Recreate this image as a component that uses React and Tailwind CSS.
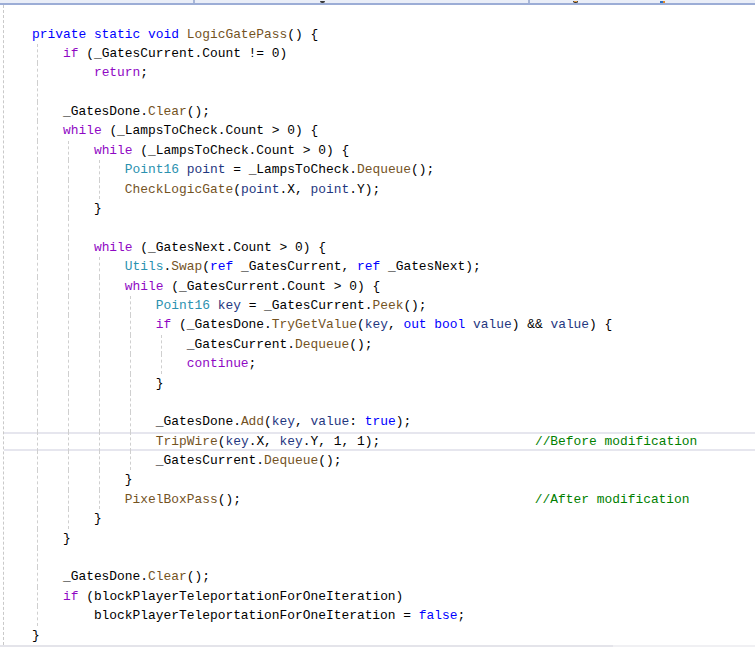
import React from 'react';

// token colours, VS light theme
const C = {
  k: 'text-[#0000ff]',
  c: 'text-[#8f08c4]',
  t: 'text-[#2b91af]',
  m: 'text-[#74531f]',
  v: 'text-[#1f377f]',
  g: 'text-[#008000]',
};

const guideLeft = ['left-[33px]', 'left-[64px]', 'left-[95px]', 'left-[126px]', 'left-[157px]'];

const lines = [
  [['k', 'private static void '], ['m', 'LogicGatePass'], '() {'],
  ['    ', ['c', 'if'], ' (_GatesCurrent.Count != 0)'],
  ['        ', ['c', 'return'], ';'],
  [],
  ['    _GatesDone.', ['m', 'Clear'], '();'],
  ['    ', ['c', 'while'], ' (_LampsToCheck.Count > 0) {'],
  ['        ', ['c', 'while'], ' (_LampsToCheck.Count > 0) {'],
  ['            ', ['t', 'Point16'], ' ', ['v', 'point'], ' = _LampsToCheck.', ['m', 'Dequeue'], '();'],
  ['            ', ['m', 'CheckLogicGate'], '(', ['v', 'point'], '.X, ', ['v', 'point'], '.Y);'],
  ['        }'],
  [],
  ['        ', ['c', 'while'], ' (_GatesNext.Count > 0) {'],
  ['            ', ['t', 'Utils'], '.', ['m', 'Swap'], '(', ['k', 'ref'], ' _GatesCurrent, ', ['k', 'ref'], ' _GatesNext);'],
  ['            ', ['c', 'while'], ' (_GatesCurrent.Count > 0) {'],
  ['                ', ['t', 'Point16'], ' ', ['v', 'key'], ' = _GatesCurrent.', ['m', 'Peek'], '();'],
  ['                ', ['c', 'if'], ' (_GatesDone.', ['m', 'TryGetValue'], '(', ['v', 'key'], ', ', ['k', 'out bool'], ' ', ['v', 'value'], ') && ', ['v', 'value'], ') {'],
  ['                    _GatesCurrent.', ['m', 'Dequeue'], '();'],
  ['                    ', ['c', 'continue'], ';'],
  ['                }'],
  [],
  ['                _GatesDone.', ['m', 'Add'], '(', ['v', 'key'], ', ', ['v', 'value'], ': ', ['k', 'true'], ');'],
  ['                ', ['m', 'TripWire'], '(', ['v', 'key'], '.X, ', ['v', 'key'], '.Y, 1, 1);', ' '.repeat(20), ['g', '//Before modification']],
  ['                _GatesCurrent.', ['m', 'Dequeue'], '();'],
  ['            }'],
  ['            ', ['m', 'PixelBoxPass'], '();', ' '.repeat(38), ['g', '//After modification']],
  ['        }'],
  ['    }'],
  [],
  ['    _GatesDone.', ['m', 'Clear'], '();'],
  ['    ', ['c', 'if'], ' (blockPlayerTeleportationForOneIteration)'],
  ['        blockPlayerTeleportationForOneIteration = ', ['k', 'false'], ';'],
  ['}'],
];

// which indent guides show on each line
function guidesFor(i) {
  const g = [];
  if (i >= 1 && i <= 30) g.push(0);
  if (i >= 6 && i <= 25) g.push(1);
  if ((i >= 7 && i <= 8) || (i >= 12 && i <= 24)) g.push(2);
  if (i >= 14 && i <= 22) g.push(3);
  if (i >= 16 && i <= 17) g.push(4);
  return g;
}

function CodeLine({ tokens, index }) {
  const current = index === 21;
  return (
    <div
      className={`relative h-[19.4px] pl-[28px] leading-[19.4px] whitespace-pre ${
        current ? 'shadow-[inset_0_2px_0_#e6e6ee,inset_0_-2px_0_#e6e6ee]' : ''
      }`}
    >
      {guidesFor(index).map((g) => (
        <span key={g} className={`absolute top-0 bottom-0 ${guideLeft[g]} border-l border-dashed border-[#cfcfcf]`} />
      ))}
      <span className="relative">
        {tokens.map((tk, j) =>
          typeof tk === 'string' ? (
            <span key={j}>{tk}</span>
          ) : (
            <span key={j} className={C[tk[0]]}>
              {tk[1]}
            </span>
          )
        )}
        {tokens.length === 0 && ' '}
      </span>
    </div>
  );
}

export default function App() {
  return (
    <div className="flex h-[647px] w-[755px] flex-col overflow-hidden bg-white">
      {/* tab strip, mostly scrolled out of view */}
      <div className="flex h-[5px] shrink-0 border-b-2 border-[#9cadd6] bg-[#eaeef8]">
        <div className="w-[193px]" />
        <div className="w-[2px] bg-[#a9b7d8]" />
        <div className="flex w-[333px] items-end">
          <span className="ml-[125px] h-[2px] w-[5px] rounded-b-full bg-[#3a3a3a]" />
        </div>
        <div className="w-[2px] bg-[#a9b7d8]" />
        <div className="flex flex-1 items-end">
          <span className="ml-[43px] h-[2px] w-[5px] rounded-b-full border-x border-b border-[#333] bg-[#e8a040]" />
          <span className="ml-[82px] h-[2px] w-[3px] bg-[#3070c0]" />
          <span className="h-[2px] w-[2px] bg-[#e08a2a]" />
        </div>
      </div>

      <div className="ml-[3px] min-h-0 flex-1 overflow-hidden border-l border-dashed border-[#c9c9c9] pt-[19.5px] font-['Liberation_Mono',monospace] text-[12.9px] text-black">
        {lines.map((tokens, i) => (
          <CodeLine key={i} tokens={tokens} index={i} />
        ))}
      </div>

      <div className="flex h-[2px] shrink-0">
        <div className="w-[613px] bg-[#e4e4ea]" />
        <div className="flex-1 bg-[#f0f0f3]" />
      </div>
    </div>
  );
}
